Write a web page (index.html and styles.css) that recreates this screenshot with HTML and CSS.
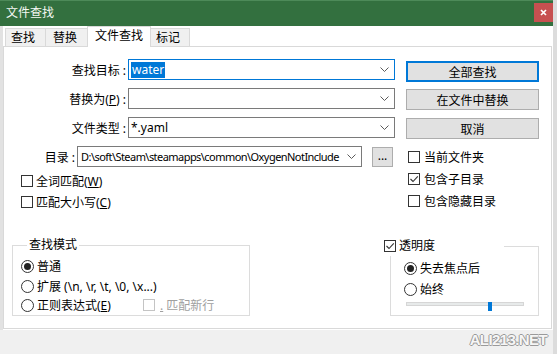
FILE: index.html
```html
<!DOCTYPE html>
<html lang="zh">
<head>
<meta charset="utf-8">
<title>文件查找</title>
<link rel="stylesheet" href="styles.css">
</head>
<body>
<div class="window">
  <div class="titlebar">
    <span class="title">文件查找</span>
    <div class="close">
      <svg width="7" height="7" viewBox="0 0 7 7"><path d="M1 1L6 6M6 1L1 6" stroke="#fff" stroke-width="1.7" fill="none"/></svg>
    </div>
  </div>
  <div class="client">
    <div class="tabs">
      <div class="tab t1">查找</div>
      <div class="tab t2">替换</div>
      <div class="tab t3 active">文件查找</div>
      <div class="tab t4">标记</div>
    </div>
    <div class="panel">
      <div class="top">
        <div class="left">
          <div class="row">
            <span class="label">查找目标 :</span>
            <div class="combo focus w267"><span class="sel">water</span><svg class="chev" width="9" height="5" viewBox="0 0 9 5"><path d="M0.5 0.5L4.5 4.5L8.5 0.5" stroke="#5a5a5a" fill="none"/></svg></div>
          </div>
          <div class="row">
            <span class="label">替换为(<u>P</u>) :</span>
            <div class="combo w267"><span></span><svg class="chev" width="9" height="5" viewBox="0 0 9 5"><path d="M0.5 0.5L4.5 4.5L8.5 0.5" stroke="#5a5a5a" fill="none"/></svg></div>
          </div>
          <div class="row">
            <span class="label">文件类型 :</span>
            <div class="combo w267"><span>*.yaml</span><svg class="chev" width="9" height="5" viewBox="0 0 9 5"><path d="M0.5 0.5L4.5 4.5L8.5 0.5" stroke="#5a5a5a" fill="none"/></svg></div>
          </div>
          <div class="row dir">
            <span class="label">目录 :</span>
            <div class="combo w285"><span class="path">D:\soft\Steam\steamapps\common\OxygenNotInclude</span><svg class="chev" width="9" height="5" viewBox="0 0 9 5"><path d="M0.5 0.5L4.5 4.5L8.5 0.5" stroke="#5a5a5a" fill="none"/></svg></div>
            <div class="browse">...</div>
          </div>
          <div class="check-row left-check"><span class="cb"></span><span>全词匹配(<u>W</u>)</span></div>
          <div class="check-row left-check"><span class="cb"></span><span>匹配大小写(<u>C</u>)</span></div>
        </div>
        <div class="right">
          <div class="btn default">全部查找</div>
          <div class="btn">在文件中替换</div>
          <div class="btn third">取消</div>
          <div class="rchecks">
            <div class="check-row rcheck"><span class="cb"></span><span>当前文件夹</span></div>
            <div class="check-row rcheck"><span class="cb"><svg width="10" height="10" viewBox="0 0 10 10"><path d="M1.5 5L4 7.5L8.8 2.3" stroke="#333" stroke-width="1.1" fill="none"/></svg></span><span>包含子目录</span></div>
            <div class="check-row rcheck"><span class="cb"></span><span>包含隐藏目录</span></div>
          </div>
        </div>
      </div>
      <div class="bottom">
        <fieldset class="group g-left">
          <legend>查找模式</legend>
          <div class="radio-row"><span class="rb on"></span><span>普通</span></div>
          <div class="radio-row"><span class="rb"></span><span>扩展 (\n, \r, \t, \0, \x...)</span></div>
          <div class="radio-row last">
            <div class="regex"><span class="rb"></span><span>正则表达式(<u>E</u>)</span></div>
            <div class="disabled-check"><span class="cb dis"></span><span><u>.</u> 匹配新行</span></div>
          </div>
        </fieldset>
        <fieldset class="group g-right">
          <legend class="trans"><span class="cb"><svg width="10" height="10" viewBox="0 0 10 10"><path d="M1.5 5L4 7.5L8.8 2.3" stroke="#333" stroke-width="1.1" fill="none"/></svg></span><span>透明度</span></legend>
          <div class="radio-row"><span class="rb on"></span><span>失去焦点后</span></div>
          <div class="radio-row second"><span class="rb"></span><span>始终</span></div>
          <div class="slider"><div class="track"></div><div class="thumb"></div></div>
        </fieldset>
      </div>
    </div>
  </div>
  <div class="band"><span class="wm">ALI213.NET</span></div>
</div>
</body>
</html>
```
FILE: styles.css
```css
body {
  margin: 0;
  background: #dcdcdc;
  font: 12px "Noto Sans", "Noto Sans CJK SC", sans-serif;
  color: #000;
}
.window {
  width: 553px;
  height: 354px;
  display: flex;
  flex-direction: column;
  background: #f0f0f0;
  overflow: hidden;
}
.titlebar {
  height: 26px;
  flex-shrink: 0;
  background: #33703f;
  box-shadow: inset 0 1px 0 #4d8a59;
  display: flex;
  align-items: flex-start;
}
.title {
  color: #f3f8f3;
  line-height: 26px;
  padding-left: 6px;
}
.close {
  margin-left: auto;
  margin-top: 3px;
  width: 19px;
  height: 19px;
  background: #c75050;
  display: flex;
  align-items: center;
  justify-content: center;
}
.client {
  height: 304px;
  flex-shrink: 0;
  box-sizing: border-box;
  background: #fff;
  border-left: 3px solid #e2e2e2;
  display: flex;
  flex-direction: column;
}
.tabs {
  display: flex;
  align-items: flex-end;
  height: 20px;
  flex-shrink: 0;
  margin-left: 2px;
}
.tab {
  height: 18px;
  box-sizing: border-box;
  border: 1px solid #d9d9d9;
  border-bottom: none;
  background: #f0f0f0;
  line-height: 18px;
  padding-left: 6px;
  margin-right: -1px;
}
.t1 { width: 41px; padding-left: 5px; }
.t2 { width: 43px; padding-left: 7px; }
.t3 { width: 64px; padding-left: 7px; }
.t4 { width: 40px; padding-left: 5px; }
.tab.active {
  height: 21px;
  background: #fff;
  margin-bottom: -1px;
  line-height: 18px;
  position: relative;
  z-index: 2;
}
.panel {
  height: 283px;
  flex-shrink: 0;
  box-sizing: border-box;
  border: 1px solid #d9d9d9;
  margin-right: 1px;
  display: flex;
  flex-direction: column;
}
.top {
  display: flex;
  height: 165px;
  flex-shrink: 0;
}
.left {
  width: 391px;
  box-sizing: border-box;
  padding-top: 12px;
  display: flex;
  flex-direction: column;
}
.row {
  display: flex;
  justify-content: flex-end;
  align-items: center;
  height: 21px;
  margin-bottom: 8px;
}
.row.dir {
  margin-right: 2px;
  margin-bottom: 3px;
}
.label {
  margin-right: 2px;
  white-space: nowrap;
}
.combo {
  height: 21px;
  box-sizing: border-box;
  border: 1px solid #7a7a7a;
  background: #fff;
  display: flex;
  align-items: center;
  padding-left: 2px;
  padding-right: 5px;
  white-space: nowrap;
  overflow: hidden;
}
.combo.focus { border-color: #0078d7; }
.w267 { width: 267px; }
.w285 { width: 285px; }
.chev { margin-left: auto; flex-shrink: 0; }
.sel {
  background: #0078d7;
  color: #fff;
  line-height: 16px;
  padding: 0 1px;
}
.path {
  font-size: 11px;
  letter-spacing: -0.55px;
  padding-left: 1px;
}
.browse {
  width: 21px;
  height: 20px;
  box-sizing: border-box;
  margin-left: 10px;
  border: 1px solid #adadad;
  background: #e1e1e1;
  display: flex;
  align-items: center;
  justify-content: center;
  line-height: 1;
  padding-bottom: 2px;
}
.check-row {
  display: flex;
  align-items: center;
  height: 21px;
  gap: 3px;
  white-space: nowrap;
}
.left-check { padding-left: 17px; }
.cb {
  width: 12px;
  height: 12px;
  box-sizing: border-box;
  border: 1px solid #333;
  background: #fff;
  display: flex;
  align-items: center;
  justify-content: center;
  flex-shrink: 0;
}
.cb.dis { border-color: #c4c4c4; }
.right {
  margin-left: 11px;
  width: 133px;
  padding-top: 14px;
  display: flex;
  flex-direction: column;
}
.btn {
  height: 21px;
  box-sizing: border-box;
  border: 1px solid #adadad;
  background: #e1e1e1;
  display: flex;
  align-items: center;
  justify-content: center;
}
.btn + .btn { margin-top: 7px; }
.btn.third { margin-top: 8px; }
.btn.default { border: 2px solid #0078d7; }
.rchecks {
  margin-top: 7px;
  display: flex;
  flex-direction: column;
}
.rcheck {
  height: 22px;
  padding-left: 2px;
  gap: 4px;
}
.bottom {
  display: flex;
  align-items: flex-start;
  margin-top: 24px;
}
.group {
  margin: 0;
  padding: 0;
  border: 1px solid #dcdcdc;
  min-width: 0;
  box-sizing: border-box;
  height: 80px;
}
.group legend {
  padding: 0 2px;
  margin-left: 6px;
  height: 18px;
  line-height: 18px;
}
.g-left {
  margin-left: 8px;
  width: 238px;
  padding-left: 8px;
  padding-top: 2px;
}
.g-right {
  margin-left: 140px;
  width: 149px;
  padding-left: 13px;
  padding-top: 2px;
}
.group legend.trans {
  margin-left: -20px;
  width: 120px;
  padding: 0;
  background: #fff;
  display: flex;
  align-items: center;
  gap: 3px;
  height: 20px;
}
.radio-row {
  display: flex;
  align-items: center;
  height: 20px;
  gap: 3px;
  white-space: nowrap;
}
.radio-row.last { height: 18px; gap: 0; }
.radio-row.second { margin-top: 1px; }
.regex {
  width: 122px;
  display: flex;
  align-items: center;
  gap: 3px;
}
.disabled-check {
  display: flex;
  align-items: center;
  gap: 5px;
  color: #a0a0a0;
}
.rb {
  width: 13px;
  height: 13px;
  box-sizing: border-box;
  border: 1px solid #333;
  border-radius: 50%;
  background: #fff;
  display: flex;
  align-items: center;
  justify-content: center;
  flex-shrink: 0;
}
.rb.on::after {
  content: "";
  width: 7px;
  height: 7px;
  border-radius: 50%;
  background: #222;
}
.slider {
  position: relative;
  width: 118px;
  height: 10px;
  margin-left: 2px;
  margin-top: 1px;
}
.track {
  margin-top: 3px;
  height: 4px;
  box-sizing: border-box;
  background: #e7eaea;
  border: 1px solid #d6d6d6;
}
.thumb {
  position: absolute;
  left: 82px;
  top: 0;
  width: 4px;
  height: 9px;
  background: #0078d7;
}
.band {
  flex: 1;
  display: flex;
  justify-content: flex-end;
  align-items: flex-start;
  padding-right: 6px;
}
.wm {
  margin-top: 1px;
  font: bold 15px "Liberation Sans", sans-serif;
  letter-spacing: -0.6px;
  color: #f6f6f6;
  text-shadow: 1px 0 0 #9a9a9a, -1px 0 0 #9a9a9a, 0 1px 0 #9a9a9a, 0 -1px 0 #9a9a9a;
}
```
